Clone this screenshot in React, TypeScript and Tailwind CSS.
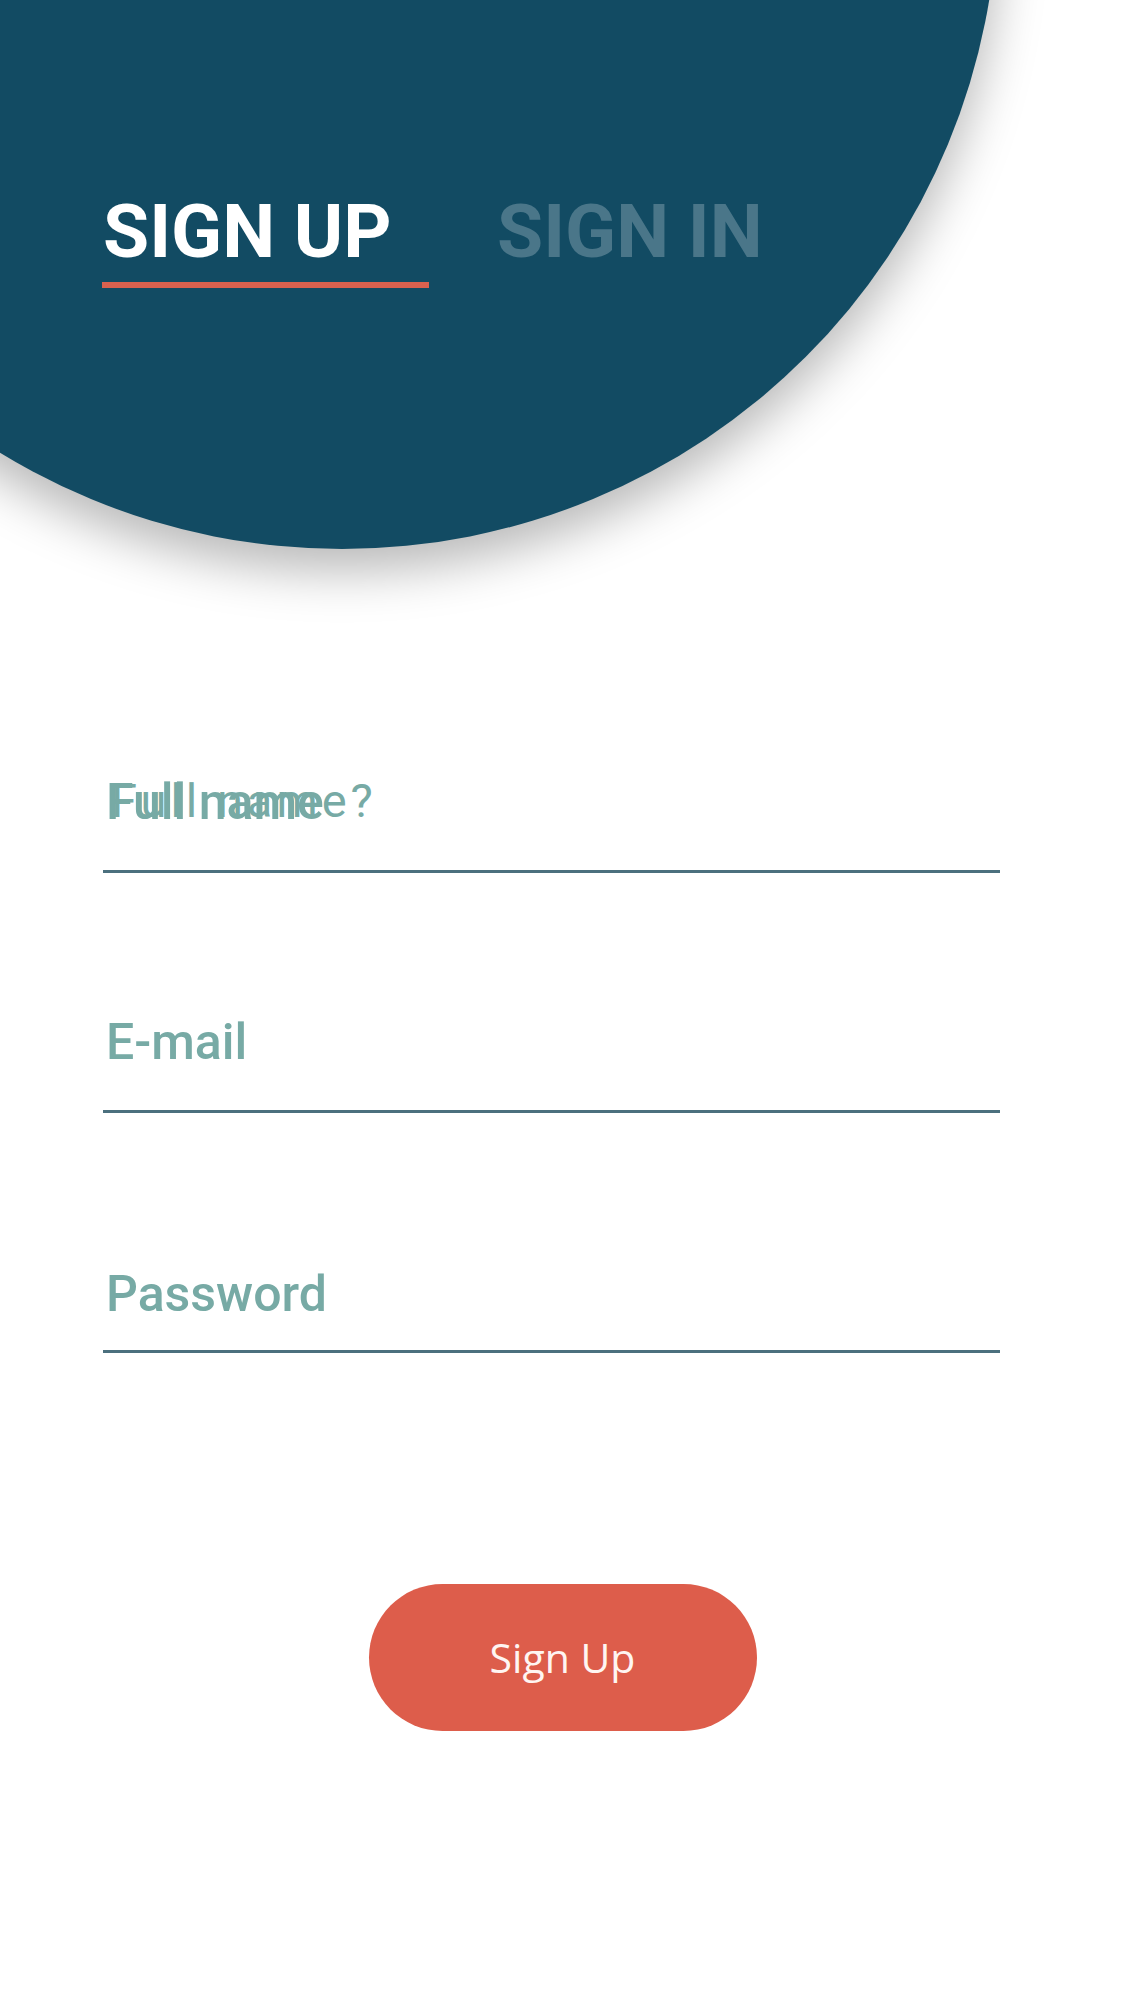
const fields = [
  { label: "Full name", placeholder: "Full name?", top: "mt-[489px]", gap: "mt-[43px]" },
  { label: "E-mail", placeholder: "", top: "mt-[144px]", gap: "mt-[43px]" },
  { label: "Password", placeholder: "", top: "mt-[156px]", gap: "mt-[31px]" },
];

const App = () => {
  return (
    <div className="relative w-[1125px] h-[2001px] overflow-hidden bg-white font-['Roboto',sans-serif]">
      {/* big header disc */}
      <div className="absolute left-[-314px] top-[-763px] w-[1312px] h-[1312px] rounded-full bg-[#124b63] shadow-[0_22px_50px_rgba(0,0,0,0.28)]" />

      <div className="relative flex items-start pl-[102px] pt-[194px]">
        <div className="w-[327px] flex flex-col">
          <span className="text-[75px] leading-none font-bold text-white pl-[1px]">SIGN UP</span>
          <div className="mt-[13px] h-[6px] w-[327px] bg-[#d9614f]" />
        </div>
        <span className="ml-[68px] text-[75px] leading-none font-bold text-[#4a7689]">SIGN IN</span>
      </div>

      <div className="relative pl-[103px] w-[1000px]">
        {fields.map((f) => (
          <div key={f.label} className={f.top}>
            <div className="relative">
              <span className="block text-[50px] leading-none font-medium text-[#77aaa5] pl-[3px]">{f.label}</span>
              {f.placeholder && (
                <span className="absolute left-[8px] top-[0px] text-[47px] leading-none font-normal tracking-[4px] text-[#77aaa5]">
                  {f.placeholder}
                </span>
              )}
            </div>
            <div className={`${f.gap} h-[3px] w-[897px] bg-[#4b707e]`} />
          </div>
        ))}
      </div>

      <div className="relative flex justify-center mt-[231px]">
        <button className="w-[388px] h-[147px] rounded-full bg-[#dd5d4b] text-[41px] text-[#fff5f2] font-['Open_Sans',sans-serif]">
          Sign Up
        </button>
      </div>
    </div>
  );
};

export default App;
